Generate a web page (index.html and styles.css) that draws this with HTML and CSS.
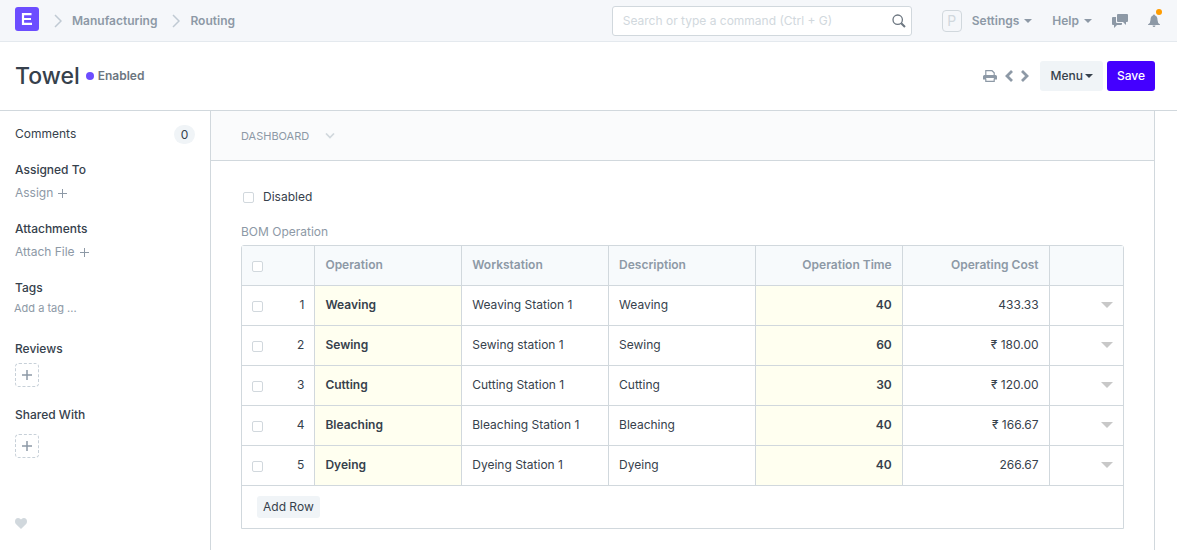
FILE: index.html
```html
<!DOCTYPE html>
<html lang="en">
<head>
<meta charset="utf-8">
<title>Towel</title>
<link rel="stylesheet" href="styles.css">
</head>
<body>
<header class="navbar">
  <nav class="breadcrumbs" aria-label="Breadcrumb">
    <a class="logo" href="#" aria-label="Home"><svg width="24" height="24" viewBox="0 0 24 24"><rect width="24" height="24" rx="3" fill="#6c4dff"/><path d="M16.500 7.200H8V16.800H17M8 12H16" fill="none" stroke="#fff" stroke-width="2.200"/></svg></a>
    <svg class="chevron" width="8" height="14" viewBox="0 0 8 14"><path d="M1 1L7 7L1 13"/></svg>
    <a href="#">Manufacturing</a>
    <svg class="chevron" width="8" height="14" viewBox="0 0 8 14"><path d="M1 1L7 7L1 13"/></svg>
    <a href="#">Routing</a>
  </nav>
  <div class="search">
    <input type="text" aria-label="Search" placeholder="Search or type a command (Ctrl + G)">
    <svg width="14" height="14" viewBox="0 0 14 14"><circle cx="5.700" cy="5.700" r="4.700" fill="none" stroke="#6c7680" stroke-width="1.300"/><path d="M9.200 9.200L13 13" stroke="#6c7680" stroke-width="2"/></svg>
  </div>
  <div class="tools">
    <span class="avatar">P</span>
    <button class="nav-button settings" type="button">Settings <span class="caret"></span></button>
    <button class="nav-button help" type="button">Help <span class="caret"></span></button>
    <button class="nav-button chat" type="button" aria-label="Chat"><svg width="16" height="14" viewBox="0 0 16 14"><path fill="#8d99a6" d="M6 0H15Q16 0 16 1V7Q16 8 15 8H14V11L11 8H6Q5 8 5 7V1Q5 0 6 0ZM1 3H4V8Q4 9 5 9H10V10Q10 11 9 11H5L2 14V11H1Q0 11 0 10V4Q0 3 1 3Z"/></svg></button>
    <button class="nav-button bell" type="button" aria-label="Notifications"><svg width="12" height="14" viewBox="0 0 12 14"><path fill="#8d99a6" d="M5 1.500Q5 .5 6 .5T7 1.500Q9.500 2.200 9.500 6Q9.500 9 12 10.500V11H0V10.500Q2.500 9 2.500 6Q2.500 2.200 5 1.500ZM4.500 11.500H7.500Q7.300 13 6 13T4.500 11.500Z"/></svg><span class="alert-dot"></span></button>
  </div>
</header>

<section class="page-head">
  <h1>Towel</h1>
  <span class="status">Enabled</span>
  <div class="actions">
    <button class="icon-button print" type="button" aria-label="Print"><svg width="14" height="12" viewBox="0 0 14 12"><path d="M2.800 6V.7H9L11.200 2.800V6M2.800 8.500V11.300H11.200V8.500" fill="none" stroke="#8d99a6" stroke-width="1.200"/><path d="M1.500 5H12.500Q14 5 14 6.500V9.500H11V8H3V9.500H0V6.500Q0 5 1.500 5Z" fill="#8d99a6"/></svg></button>
    <button class="icon-button" type="button" aria-label="Previous"><svg width="8" height="12" viewBox="0 0 8 12"><path d="M7 1L2 6L7 11" fill="none" stroke="#8d99a6" stroke-width="2.800"/></svg></button>
    <button class="icon-button" type="button" aria-label="Next"><svg width="8" height="12" viewBox="0 0 8 12"><path d="M1 1L6 6L1 11" fill="none" stroke="#8d99a6" stroke-width="2.800"/></svg></button>
    <button class="btn menu" type="button">Menu<span class="caret"></span></button>
    <button class="btn primary" type="button">Save</button>
  </div>
</section>

<div class="layout">
  <aside class="sidebar">
    <div class="comments"><a href="#">Comments</a><span class="badge">0</span></div>
    <section class="side-group assigned">
      <h2>Assigned To</h2>
      <button class="side-link" type="button">Assign <svg width="9" height="9" viewBox="0 0 9 9"><path d="M4.500 0V9M0 4.500H9"/></svg></button>
    </section>
    <section class="side-group">
      <h2>Attachments</h2>
      <button class="side-link" type="button">Attach File <svg width="9" height="9" viewBox="0 0 9 9"><path d="M4.500 0V9M0 4.500H9"/></svg></button>
    </section>
    <section class="side-group tags">
      <h2>Tags</h2>
      <input class="tag-input" type="text" aria-label="Add a tag" placeholder="Add a tag ...">
    </section>
    <section class="side-group reviews">
      <h2>Reviews</h2>
      <button class="add-box" type="button" aria-label="Add review"><svg width="10" height="10" viewBox="0 0 10 10"><path d="M5 0V10M0 5H10"/></svg></button>
    </section>
    <section class="side-group shared">
      <h2>Shared With</h2>
      <button class="add-box" type="button" aria-label="Share"><svg width="10" height="10" viewBox="0 0 10 10"><path d="M5 0V10M0 5H10"/></svg></button>
    </section>
    <button class="like" type="button" aria-label="Like"><svg width="12" height="11" viewBox="0 0 12 11"><path fill="#d1d8dd" d="M6 11L.9 6Q0 5 0 3.500Q0 0 3.200 0Q5 0 6 1.500Q7 0 8.800 0Q12 0 12 3.500Q12 5 11.100 6Z"/></svg></button>
  </aside>

  <main class="form">
    <button class="dashboard" type="button">DASHBOARD <svg width="10" height="6" viewBox="0 0 10 6"><path d="M1 .5L5 4.500L9 .5" fill="none" stroke="#d1d8dd" stroke-width="1.700"/></svg></button>
    <div class="form-body">
      <label class="check"><input type="checkbox"> Disabled</label>
      <div class="grid-label" id="bom-label">BOM Operation</div>
      <div class="grid">
        <table aria-labelledby="bom-label">
          <colgroup><col class="narrow"><col><col><col><col><col><col class="narrow"></colgroup>
          <thead>
            <tr><th><div class="index"><input type="checkbox" aria-label="Select all"></div></th><th>Operation</th><th>Workstation</th><th>Description</th><th class="num">Operation Time</th><th class="num">Operating Cost</th><th></th></tr>
          </thead>
          <tbody>
            <tr><td><div class="index"><input type="checkbox" aria-label="Select row 1"><span>1</span></div></td><td class="key">Weaving</td><td>Weaving Station 1</td><td>Weaving</td><td class="key num">40</td><td class="num">433.33</td><td><button class="open" type="button" aria-label="Open row 1"></button></td></tr>
            <tr><td><div class="index"><input type="checkbox" aria-label="Select row 2"><span>2</span></div></td><td class="key">Sewing</td><td>Sewing station 1</td><td>Sewing</td><td class="key num">60</td><td class="num">₹ 180.00</td><td><button class="open" type="button" aria-label="Open row 2"></button></td></tr>
            <tr><td><div class="index"><input type="checkbox" aria-label="Select row 3"><span>3</span></div></td><td class="key">Cutting</td><td>Cutting Station 1</td><td>Cutting</td><td class="key num">30</td><td class="num">₹ 120.00</td><td><button class="open" type="button" aria-label="Open row 3"></button></td></tr>
            <tr><td><div class="index"><input type="checkbox" aria-label="Select row 4"><span>4</span></div></td><td class="key">Bleaching</td><td>Bleaching Station 1</td><td>Bleaching</td><td class="key num">40</td><td class="num">₹ 166.67</td><td><button class="open" type="button" aria-label="Open row 4"></button></td></tr>
            <tr><td><div class="index"><input type="checkbox" aria-label="Select row 5"><span>5</span></div></td><td class="key">Dyeing</td><td>Dyeing Station 1</td><td>Dyeing</td><td class="key num">40</td><td class="num">266.67</td><td><button class="open" type="button" aria-label="Open row 5"></button></td></tr>
          </tbody>
        </table>
        <div class="grid-footer"><button class="add-row" type="button">Add Row</button></div>
      </div>
    </div>
  </main>
</div>
</body>
</html>
```
FILE: styles.css
```css
* { box-sizing: border-box; }

body {
  display: flex;
  flex-direction: column;
  min-height: 100vh;
  margin: 0;
  background: #fff;
  color: #36414c;
  font: 12px/18px Inter, "Liberation Sans", sans-serif;
}

button, input {
  margin: 0;
  font: inherit;
  color: inherit;
}

button {
  padding: 0;
  border: 0;
  background: none;
  cursor: pointer;
}

svg { display: block; flex: none; }
a { color: inherit; text-decoration: none; }

.navbar {
  display: flex;
  align-items: center;
  height: 42px;
  padding: 0 15px;
  border-bottom: 1px solid #e4e9ee;
  background: #f5f7fa;
  color: #8d99a6;
  font-weight: 600;
}

.breadcrumbs { display: flex; align-items: center; flex: 1; }
.logo { margin: -3px 0 0; }
.chevron { margin: 0 10px 0 15px; fill: none; stroke: #c0cad3; stroke-width: 1.500; }

.search {
  display: flex;
  align-items: center;
  width: 300px;
  height: 30px;
  padding: 0 5px 0 10px;
  border: 1px solid #d1d8dd;
  border-radius: 3px;
  background: #fff;
  font-weight: 400;
}
.search input { flex: 1; min-width: 0; padding: 0; border: 0; outline: 0; background: none; }
.search input::placeholder { color: #d1d8dd; opacity: 1; }

.tools { display: flex; align-items: center; margin-left: 30px; }
.avatar {
  width: 20px;
  height: 22px;
  border: 1px solid #d1d8dd;
  border-radius: 4px;
  color: #d1d8dd;
  font-size: 14px;
  font-weight: 400;
  line-height: 20px;
  text-align: center;
}
.nav-button { display: flex; align-items: center; gap: 5px; font-weight: 600; }
.settings { margin-left: 10px; }
.help, .chat { margin-left: 20px; }
.bell { position: relative; margin: 0 2px 0 20px; }
.alert-dot {
  position: absolute;
  top: -5px;
  right: -2px;
  width: 6px;
  height: 6px;
  border-radius: 50%;
  background: #ff9c00;
}

.caret {
  border: 4px solid transparent;
  border-top-color: currentColor;
  border-bottom: 0;
}

.page-head {
  display: flex;
  align-items: center;
  height: 69px;
  padding: 0 22px 0 15px;
  border-bottom: 1px solid #d1d8dd;
}
h1 { margin: 0; font-size: 23px; font-weight: 500; line-height: 32px; }
.status { display: flex; align-items: center; gap: 4px; margin-left: 6px; color: #6c7680; font-weight: 600; }
.status::before { content: ""; width: 8px; height: 8px; border-radius: 50%; background: #6c4dff; }
.actions { display: flex; align-items: center; margin-left: auto; }
.icon-button { margin-right: 8px; }
.btn { height: 30px; padding: 0 10px; border-radius: 3px; background: #f0f4f7; font-weight: 500; }
.menu { display: flex; align-items: center; gap: 2px; margin: 0 4px 0 3px; }
.primary { background: #4400ff; color: #fff; }

.layout { display: flex; flex: 1; }

.sidebar { width: 210px; padding: 13px 15px 0; }
.comments { display: flex; justify-content: space-between; align-items: center; height: 20px; }
.badge { width: 21px; border-radius: 10px; background: #f0f4f7; line-height: 19px; text-align: center; }
.side-group { margin-top: 18px; }
.assigned { margin-top: 17px; }
h2 { margin: 0; font-size: 12px; font-weight: 500; line-height: 18px; }
.side-link { display: flex; align-items: center; gap: 5px; margin-top: 5px; color: #8d99a6; line-height: 18px; }
.side-link path, .add-box path { stroke: #8d99a6; stroke-width: 1; }
.add-box path { stroke-width: 1.500; }
.tag-input { display: block; width: 100%; height: 18px; margin: 2px 0 0 -1px; padding: 0; border: 0; font-size: 11px; }
.tag-input::placeholder { color: #8d99a6; opacity: 1; }
.reviews { margin-top: 23px; }
.add-box {
  display: grid;
  place-items: center;
  width: 24px;
  height: 24px;
  margin-top: 5px;
  border: 1px dashed #c7d0d8;
  border-radius: 4px;
}
.shared { margin-top: 19px; }
.shared .add-box { margin-top: 10px; }
.like { margin-top: 60px; }

.form {
  flex: 1;
  min-width: 0;
  margin-right: 22px;
  border: solid #d1d8dd;
  border-width: 0 1px;
}
.dashboard {
  display: flex;
  align-items: center;
  gap: 16px;
  width: 100%;
  height: 50px;
  padding: 0 30px;
  border-bottom: 1px solid #d1d8dd;
  background: #fafbfc;
  color: #8d99a6;
  font-size: 11px;
}
.form-body { padding: 27px 30px 21px; }

input[type="checkbox"] {
  appearance: none;
  width: 11px;
  height: 11px;
  border: 1px solid #d1d8dd;
  border-radius: 2px;
  background: #fff;
}
.check { display: flex; align-items: center; gap: 9px; padding-left: 2px; }
.grid-label { margin: 17px 0 4px; color: #8d99a6; }

.grid { border: 1px solid #d1d8dd; border-radius: 3px 3px 0 0; }
table { width: 100%; border-spacing: 0; table-layout: fixed; }
.narrow { width: 8.333%; }
th, td {
  height: 40px;
  padding: 0 10px 2px;
  border-right: 1px solid #d1d8dd;
  border-bottom: 1px solid #d1d8dd;
  text-align: left;
}
th { background: #f7fafc; color: #8d99a6; font-weight: 600; }
th:last-child, td:last-child { border-right: 0; }
.num { text-align: right; }
.key { background: #fffff0; font-weight: 600; }
.index { display: flex; align-items: center; justify-content: space-between; }
.index input { margin-top: 3px; }
.open {
  display: block;
  margin-left: auto;
  border: 6px solid transparent;
  border-top-color: #c8c8c8;
  border-bottom: 0;
}
.grid-footer { padding: 10px 15px; }
.add-row { display: block; height: 22px; padding: 0 6px; border-radius: 3px; background: #f0f4f7; }
```
